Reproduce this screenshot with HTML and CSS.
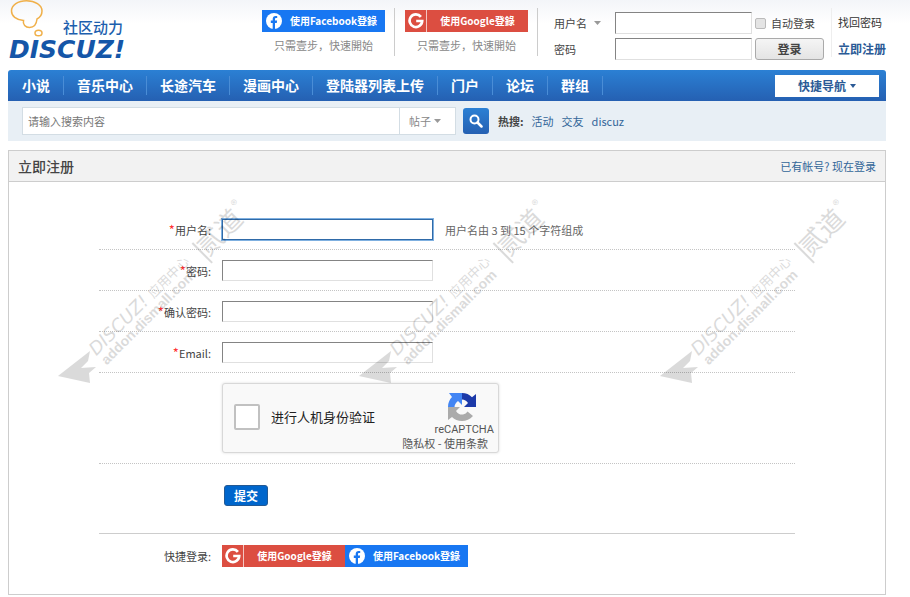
FILE: index.html
```
<!DOCTYPE html>
<html lang="zh-CN">
<head>
    <meta charset="utf-8">
    <title>立即注册</title>
    <link rel="stylesheet" href="styles.css">
</head>
<body>
    <!-- shared icons -->
    <svg class="defs" aria-hidden="true">
        <symbol id="icon-fb" viewBox="0 0 16 16">
            <circle cx="8" cy="8" r="8" fill="#fff"/>
            <path d="M6.7 16V10H4.8V7.6h1.9V5.9c0-2 1.1-3 2.9-3 .8 0 1.6.1 1.6.1v1.9h-1c-.9 0-1.2.5-1.2 1.1v1.6h2.1L10.8 10H9v6z" fill="#1877f2"/>
        </symbol>
        <symbol id="icon-google" viewBox="0 0 16 16">
            <path d="M12.9 3.9A6.3 6.3 0 1 0 14.2 8H8.2" fill="none" stroke="#fff" stroke-width="2.7"/>
        </symbol>
    </svg>

    <div class="wrap">
        <div class="header">
            <a href="#" class="logo" aria-label="Discuz!">
                <svg width="130" height="68" viewBox="0 0 130 68">
                    <g fill="none" stroke="#f0b04a" stroke-width="1.500">
                        <path d="M15.500 20.500C8 20 3.500 16 3.500 11 3.500 5 10 .8 18.500.8S34 5 34 11c0 3.500-2 6.500-5 8-.5 5-3 8.500-7.500 8.500-4 0-7-3-6-7z"/>
                        <ellipse cx="30.500" cy="33" rx="3.500" ry="2.800"/>
                    </g>
                    <text class="logo-cn" x="55" y="33">社区动力</text>
                    <text class="logo-en" x="1" y="58">DISCUZ!</text>
                </svg>
            </a>
            <div class="connect">
                <a href="#" class="social facebook"><svg class="social-icon"><use href="#icon-fb"/></svg><span>使用Facebook登錄</span></a>
                <p>只需壹步，快速開始</p>
            </div>
            <div class="connect">
                <a href="#" class="social google"><svg class="social-icon"><use href="#icon-google"/></svg><span>使用Google登錄</span></a>
                <p>只需壹步，快速開始</p>
            </div>
            <form class="login">
                <select class="arrow" aria-label="登录方式">
                    <option>用户名</option>
                    <option>Email</option>
                </select>
                <input type="text" class="px" aria-label="用户名">
                <label class="auto"><input type="checkbox"><span>自动登录</span></label>
                <label for="ls_password">密码</label>
                <input type="password" class="px" id="ls_password">
                <button type="submit" class="btn-login">登录</button>
            </form>
            <div class="links">
                <a href="#">找回密码</a>
                <a href="#" class="reg">立即注册</a>
            </div>
        </div>

        <div class="nav">
            <ul>
                <li><a href="#">小说</a></li>
                <li><a href="#">音乐中心</a></li>
                <li><a href="#">长途汽车</a></li>
                <li><a href="#">漫画中心</a></li>
                <li><a href="#">登陆器列表上传</a></li>
                <li><a href="#">门户</a></li>
                <li><a href="#">论坛</a></li>
                <li><a href="#">群组</a></li>
            </ul>
            <button type="button" class="quick">快捷导航<i class="caret"></i></button>
        </div>

        <form class="search">
            <div class="search-box">
                <input type="text" placeholder="请输入搜索内容" aria-label="搜索">
                <select class="arrow" aria-label="搜索类型">
                    <option>帖子</option>
                    <option>用户</option>
                </select>
            </div>
            <button type="submit" class="btn-search" aria-label="搜索">
                <svg width="14" height="14" viewBox="0 0 14 14" fill="none" stroke="#fff">
                    <circle cx="5.500" cy="5.500" r="4" stroke-width="2"/>
                    <path d="M8.500 8.500l4 4" stroke-width="2.500" stroke-linecap="round"/>
                </svg>
            </button>
            <div class="hot">
                <strong>热搜:</strong>
                <a href="#">活动</a>
                <a href="#">交友</a>
                <a href="#">discuz</a>
            </div>
        </form>

        <div class="panel">
            <div class="panel-head">
                <h3>立即注册</h3>
                <a href="#">已有帐号? 现在登录</a>
            </div>
            <form class="register">
                <div class="row">
                    <label for="username"><em>*</em>用户名:</label>
                    <input type="text" class="px active" id="username">
                    <span class="tip">用户名由 3 到 15 个字符组成</span>
                </div>
                <div class="row">
                    <label for="password"><em>*</em>密码:</label>
                    <input type="password" class="px" id="password">
                </div>
                <div class="row">
                    <label for="password2"><em>*</em>确认密码:</label>
                    <input type="password" class="px" id="password2">
                </div>
                <div class="row">
                    <label for="email"><em>*</em>Email:</label>
                    <input type="text" class="px" id="email">
                </div>
                <div class="row row-captcha">
                    <span class="label"></span>
                    <div class="captcha">
                        <input type="checkbox" id="robot">
                        <label for="robot">进行人机身份验证</label>
                        <div class="captcha-side">
                            <svg width="28" height="28" viewBox="0 0 28 28">
                                <path d="M14 0c4 0 7.500 1.500 10 4.200L28 1v13H16l4-4c-1.500-2-3.500-3.500-6-3.500z" fill="#1c3aa9"/>
                                <path d="M0 14c0-4 1.500-7.500 4-10L1 0h13v12l-4-4c-2 1.500-3.500 3.500-3.500 6z" fill="#4285f4"/>
                                <path d="M0 14h12l-4 4c2 3 4.500 4 7 3.500 2-.3 3.500-1.500 4.500-3l5.500 4.500C22 26.500 18 28 14 28S6.500 26.500 4 24l-4 3z" fill="#ababab"/>
                            </svg>
                            <span class="captcha-name">reCAPTCHA</span>
                            <span class="captcha-terms"><a href="#">隐私权</a> - <a href="#">使用条款</a></span>
                        </div>
                    </div>
                </div>
                <div class="row row-submit">
                    <span class="label"></span>
                    <button type="submit" class="btn-submit">提交</button>
                </div>
                <div class="row row-quick">
                    <span class="label">快捷登录:</span>
                    <a href="#" class="social google"><svg class="social-icon"><use href="#icon-google"/></svg><span>使用Google登錄</span></a>
                    <a href="#" class="social facebook"><svg class="social-icon"><use href="#icon-fb"/></svg><span>使用Facebook登錄</span></a>
                </div>
            </form>
            <svg class="watermarks" width="800" height="200" viewBox="0 -190 800 200" aria-hidden="true">
                <g id="watermark">
                    <path d="M0 0L32-25 30-15 23-8 38-9 31-3 32 7z"/>
                    <g transform="rotate(-45)">
                        <text class="wm-logo" x="41" y="13">DISCUZ!</text>
                        <text class="wm-url" x="42" y="27">addon.dismall.com</text>
                        <text class="wm-cn" x="122" y="13">应用中心</text>
                        <path d="M188 1h2v28h-2z"/>
                        <text class="wm-name" x="190" y="22">贰道</text>
                        <text class="wm-reg" x="244" y="9">®</text>
                    </g>
                </g>
                <use href="#watermark" x="301"/>
                <use href="#watermark" x="602"/>
            </svg>
        </div>
    </div>
</body>
</html>
```

FILE: styles.css
```
* {
    box-sizing: border-box;
}
body {
    margin: 0;
    color: #444;
    background: #fff linear-gradient(#f3f5f9, #fff) repeat-x;
    background-size: 100% 24px;
    font: 11px/16px "Noto Sans CJK SC", sans-serif;
}
a {
    color: #369;
    text-decoration: none;
}
p, ul, h3 {
    margin: 0;
    padding: 0;
}
input, select, button {
    margin: 0;
    color: inherit;
    font: inherit;
}
.defs {
    position: absolute;
    width: 0;
    height: 0;
}
.wrap {
    margin: 0 24px 2px 8px;
}

/* header */
.header {
    display: flex;
    align-items: flex-start;
    height: 70px;
}
.logo {
    margin-right: auto;
}
.logo-cn {
    fill: #1d5fae;
    font-size: 15px;
    font-weight: 500;
}
.logo-en {
    fill: #1556a8;
    font: italic bold 25px "DejaVu Sans", sans-serif;
}
.connect {
    margin-top: 8px;
    padding: 2px 9px 2px 10px;
    border-right: 1px solid #ccc;
    text-align: center;
}
.connect p {
    padding: 5px 0 1px;
    color: #888;
}
.social {
    display: flex;
    align-items: center;
    width: 123px;
    height: 22px;
    color: #fff;
    font-size: 10px;
    font-weight: 700;
}
.social span {
    flex: 1;
    padding-right: 4px;
    line-height: 22px;
    text-align: center;
}
.social-icon {
    width: 16px;
    height: 16px;
    margin: 0 4px;
}
.facebook {
    background: #1877f2;
}
.google {
    background: #dc4e41;
}
.google span {
    padding-right: 0;
    border-left: 1px solid #f3c6c2;
}
.google .social-icon {
    margin: 0 2px 0 3px;
}
.login {
    display: grid;
    grid-template-columns: 58px 137px 69px;
    gap: 4px 3px;
    align-items: center;
    padding: 12px 7px 0 16px;
}
.px {
    width: 100%;
    height: 22px;
    padding: 2px 4px;
    border: 1px solid;
    border-color: #848484 #e0e0e0 #e0e0e0 #848484;
    background: #fff;
}
.arrow {
    appearance: none;
    border: 0;
    padding: 0;
    background: url("data:image/svg+xml,%3Csvg xmlns='http://www.w3.org/2000/svg' width='7' height='4'%3E%3Cpath d='M0 0h7L3.500 4z' fill='%23999'/%3E%3C/svg%3E") no-repeat;
}
.login .arrow {
    width: 48px;
    background-position: right 1px center;
}
.auto {
    display: flex;
    align-items: center;
    gap: 5px;
    white-space: nowrap;
}
.auto input {
    appearance: none;
    width: 11px;
    height: 11px;
    border: 1px solid #bbb;
    border-radius: 2px;
    background: #e4e4e4;
}
.btn-login {
    height: 22px;
    padding: 0;
    border: 1px solid #aaa;
    border-radius: 3px;
    background: linear-gradient(#f5f5f5, #e4e4e4);
    font-size: 12px;
    font-weight: 700;
}
.links {
    display: flex;
    flex-direction: column;
    gap: 11px;
    margin-top: 8px;
    padding: 6px 0 0 6px;
    border-left: 1px solid #eee;
}
.links a {
    color: #333;
}
.links .reg {
    color: #2b5a96;
    font-size: 12px;
    font-weight: 700;
}

/* nav */
.nav {
    display: flex;
    justify-content: space-between;
    align-items: center;
    height: 31px;
    padding: 0 7px 0 1px;
    border-radius: 3px 3px 0 0;
    background: linear-gradient(#2b80d4, #2560b2);
}
.nav ul {
    display: flex;
    list-style: none;
}
.nav li {
    padding: 0 13px;
    border-right: 1px solid #4a8dd6;
    line-height: 18px;
}
.nav li a {
    color: #fff;
    font-size: 14px;
    font-weight: 700;
}
.quick {
    display: flex;
    align-items: center;
    justify-content: center;
    gap: 4px;
    width: 104px;
    height: 22px;
    border: 0;
    background: #fff;
    color: #2b5a96;
    font-size: 12px;
    font-weight: 700;
}
.caret {
    border: 3px solid transparent;
    border-top: 4px solid #2b5a96;
    border-bottom: 0;
}

/* search */
.search {
    display: flex;
    align-items: center;
    height: 40px;
    padding: 0 14px;
    background: #e8eff5;
}
.search-box {
    display: flex;
    flex: 0 1 434px;
    height: 28px;
    border: 1px solid #d3dde4;
    background: #fff;
}
.search-box input {
    flex: 1;
    min-width: 0;
    padding: 0 5px;
    border: 0;
    background: none;
}
.search-box input::placeholder {
    color: #777;
    opacity: 1;
}
.search-box .arrow {
    width: 56px;
    padding-left: 9px;
    border-left: 1px solid #d3dde4;
    background-position: 34px center;
    color: #888;
}
.btn-search {
    display: flex;
    align-items: center;
    justify-content: center;
    width: 26px;
    height: 26px;
    margin: 0 9px 0 7px;
    padding: 0;
    border: 0;
    border-radius: 3px;
    background: linear-gradient(#2b80d4, #2560b2);
}
.hot {
    display: flex;
    gap: 8px;
}
.hot strong {
    color: #444;
}

/* register panel */
.panel {
    position: relative;
    margin-top: 9px;
    border: 1px solid #cdcdcd;
    background: #fff;
}
.panel-head {
    display: flex;
    align-items: center;
    justify-content: space-between;
    height: 31px;
    padding: 0 9px;
    border-bottom: 1px solid #cdcdcd;
    background: #f2f2f2;
}
.panel-head h3 {
    font-size: 14px;
    font-weight: 500;
}
.register {
    padding: 27px 90px 16px;
}
.row {
    display: flex;
    align-items: center;
    padding: 10px 0 9px;
    border-bottom: 1px dotted #c4c4c4;
}
.row > label,
.row > .label {
    width: 112px;
    margin-right: 11px;
    text-align: right;
}
.row em {
    color: #f33;
    font-size: 13px;
    font-style: normal;
    line-height: 1;
}
.row .px {
    width: 211px;
    height: 21px;
}
.row .active {
    outline: 1px solid #7fb0e0;
    border-color: #2f6aa8;
}
.tip {
    margin-left: 12px;
    color: #666;
}
.row-captcha {
    padding-bottom: 10px;
}
.captcha {
    display: flex;
    align-items: center;
    width: 277px;
    height: 70px;
    padding: 0 4px 2px 11px;
    border: 1px solid #d8d8d8;
    border-radius: 3px;
    background: #f9f9f9;
    box-shadow: 0 0 3px #ddd;
    color: #222;
    font-size: 13px;
}
.captcha input {
    appearance: none;
    width: 26px;
    height: 26px;
    margin-right: 11px;
    border: 2px solid #c1c1c1;
    border-radius: 2px;
    background: #fff;
}
.captcha-side {
    display: flex;
    flex-direction: column;
    align-items: flex-end;
    margin-left: auto;
    color: #555;
    font-size: 11px;
    line-height: 14px;
}
.captcha-side svg {
    margin: 9px 18px 3px 0;
}
.captcha-name {
    font-family: Roboto, sans-serif;
    line-height: 12px;
}
.captcha-terms {
    padding-right: 6px;
}
.captcha-terms a {
    color: #555;
}
.row-submit {
    padding: 21px 0 27px;
    border-bottom: 1px solid #cdcdcd;
}
.btn-submit {
    width: 44px;
    height: 21px;
    margin-left: 2px;
    padding: 0;
    border: 1px solid #235994;
    border-radius: 3px;
    background: #06c;
    color: #fff;
    font-size: 12px;
    font-weight: 700;
    line-height: 18px;
}
.row-quick {
    padding: 11px 0;
    border-bottom: 0;
}

/* watermark lies over the whole form */
.watermarks {
    position: absolute;
    top: 35px;
    left: 49px;
    fill: #000;
    opacity: .14;
    pointer-events: none;
}
.wm-logo {
    font: italic 18px "DejaVu Sans", sans-serif;
}
.wm-url {
    font: bold 14px "Liberation Sans", sans-serif;
}
.wm-cn {
    font-size: 13px;
}
.wm-name {
    font-size: 26px;
}
.wm-reg {
    font-size: 13px;
}
```
